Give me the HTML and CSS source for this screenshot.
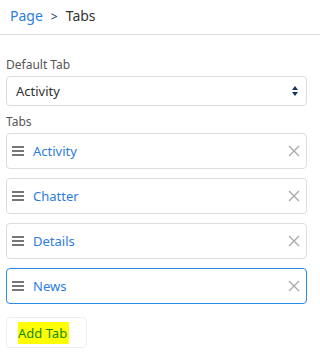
FILE: index.html
```html
<!DOCTYPE html>
<html lang="en">
<head>
<meta charset="UTF-8" />
<meta name="viewport" content="width=device-width, initial-scale=1" />
<title>Tabs</title>
<link rel="stylesheet" href="styles.css">
</head>
<body>
<div class="crumbs">
  <a href="#" class="crumb-link">Page</a>
  <span class="crumb-sep">&gt;</span>
  <span class="crumb-current">Tabs</span>
</div>
<div class="panel">
  <label class="field-label" for="defaultTab">Default Tab</label>
  <div class="select-box">
    <span class="select-value">Activity</span>
    <svg class="select-arrows" width="6" height="12" viewBox="0 0 6 12">
      <path d="M3 1 L6 5 L0 5 Z" fill="#16325c" />
      <path d="M3 11 L6 7 L0 7 Z" fill="#16325c" />
    </svg>
  </div>
  <div class="field-label">Tabs</div>
  <ul class="tab-list">
    <li class="tab-row">
      <span class="grip"><i></i><i></i><i></i></span>
      <span class="tab-name">Activity</span>
      <svg class="remove" width="12" height="12" viewBox="0 0 12 12"><path d="M1 1 L11 11 M11 1 L1 11" /></svg>
    </li>
    <li class="tab-row">
      <span class="grip"><i></i><i></i><i></i></span>
      <span class="tab-name">Chatter</span>
      <svg class="remove" width="12" height="12" viewBox="0 0 12 12"><path d="M1 1 L11 11 M11 1 L1 11" /></svg>
    </li>
    <li class="tab-row">
      <span class="grip"><i></i><i></i><i></i></span>
      <span class="tab-name">Details</span>
      <svg class="remove" width="12" height="12" viewBox="0 0 12 12"><path d="M1 1 L11 11 M11 1 L1 11" /></svg>
    </li>
    <li class="tab-row active">
      <span class="grip"><i></i><i></i><i></i></span>
      <span class="tab-name">News</span>
      <svg class="remove" width="12" height="12" viewBox="0 0 12 12"><path d="M1 1 L11 11 M11 1 L1 11" /></svg>
    </li>
  </ul>
  <button class="add-btn" type="button"><mark>Add Tab</mark></button>
</div>
</body>
</html>
```
FILE: styles.css
```css
* {
  box-sizing: border-box;
}
body {
  margin: 0;
  background: #fff;
  font-family: 'Noto Sans', 'Open Sans', sans-serif;
  color: #333;
}
.crumbs {
  height: 35px;
  border-bottom: 1px solid #ddd;
  padding: 6px 0 0 10px;
  font-size: 14px;
  display: flex;
  gap: 8px;
  align-items: baseline;
}
.crumb-link {
  color: #2b7de0;
  text-decoration: none;
}
.crumb-sep {
  color: #16325c;
  font-size: 12px;
}
.crumb-current {
  color: #333;
}
.panel {
  width: 301px;
  margin-left: 6px;
  padding-top: 22px;
}
.field-label {
  display: block;
  font-size: 12px;
  color: #555;
  line-height: 16px;
  margin-bottom: 3px;
}
.select-box {
  height: 30px;
  border: 1px solid #ddd;
  border-radius: 4px;
  display: flex;
  align-items: center;
  padding: 0 8px 0 9px;
  margin-bottom: 8px;
}
.select-value {
  flex: 1;
  font-size: 13px;
  color: #333;
}
.tab-list {
  list-style: none;
  margin: 3px 0 0;
  padding: 0;
  display: flex;
  flex-direction: column;
  gap: 9px;
}
.tab-row {
  height: 36px;
  border: 1px solid #ddd;
  border-radius: 4px;
  display: flex;
  align-items: center;
  padding: 0 6px 0 5px;
}
.tab-row.active {
  border-color: #2b8be8;
}
.grip {
  width: 12px;
  display: flex;
  flex-direction: column;
  gap: 2px;
  margin-right: 9px;
}
.grip i {
  display: block;
  height: 2px;
  background: #777;
}
.tab-name {
  flex: 1;
  font-size: 13px;
  color: #2b7de0;
}
.remove {
  stroke: #aaa;
  stroke-width: 1.4;
  fill: none;
}
.add-btn {
  margin-top: 13px;
  height: 31px;
  width: 81px;
  background: #fff;
  border: 1px solid #eee;
  border-radius: 4px;
  padding: 0 0 0 11px;
  text-align: left;
  font-family: inherit;
  font-size: 13px;
}
.add-btn mark {
  background: #ffff00;
  color: #138a13;
  padding: 2px 2px 2px 0;
}
```
